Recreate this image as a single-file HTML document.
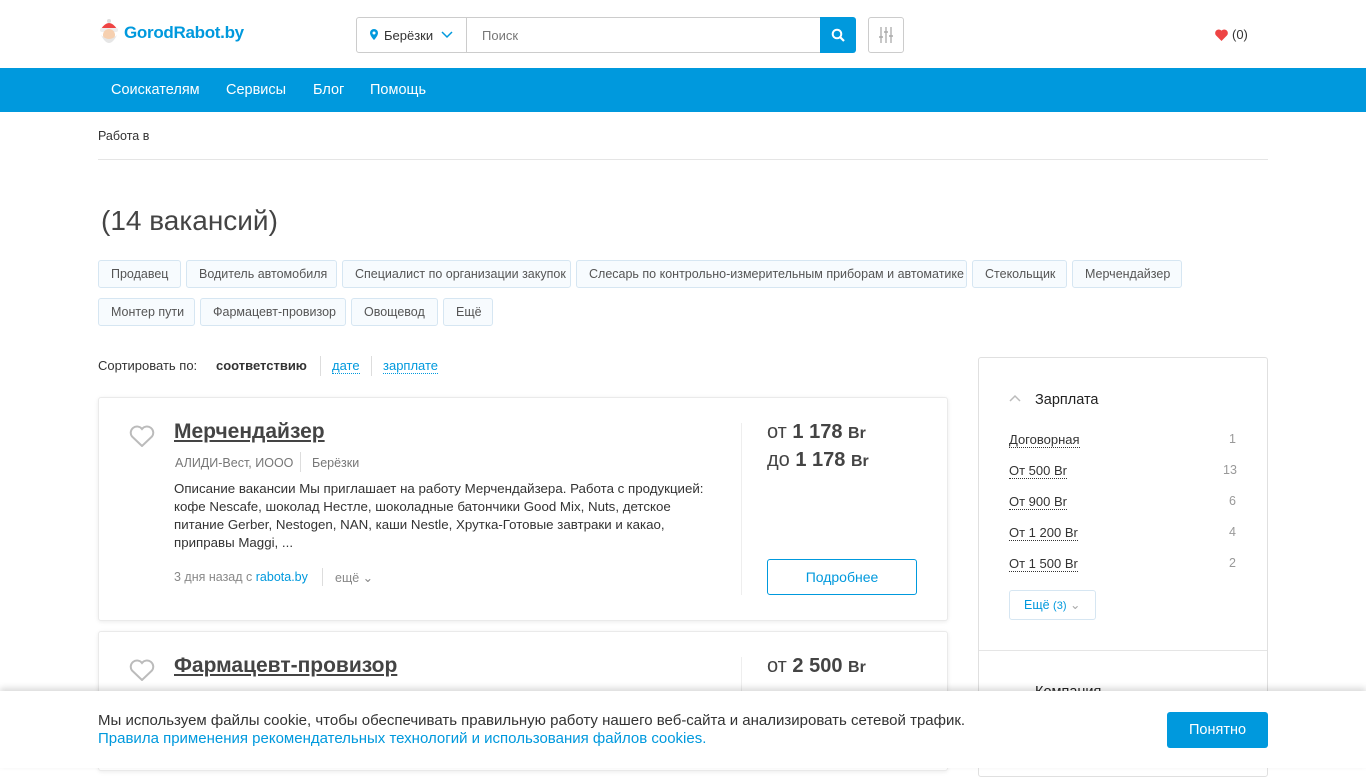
<!DOCTYPE html>
<html><head><meta charset="utf-8"><style>
*{box-sizing:border-box;margin:0;padding:0}
body{width:1366px;height:768px;overflow:hidden;font-family:"Liberation Sans",sans-serif;color:#333;background:#fff;position:relative}
.abs{position:absolute}
a{color:#0099dd;text-decoration:none}
.tag{position:absolute;height:28px;border:1px solid #d6e6f2;border-radius:3px;background:#f7fbfe;font-size:12.5px;color:#555;line-height:26px;padding:0 12px;white-space:nowrap;overflow:hidden}
.card{position:absolute;left:98px;width:850px;border:1px solid #eaeaea;border-radius:3px;box-shadow:0 1px 4px rgba(0,0,0,.08);background:#fff}
.dot{border-bottom:1px dotted #333;color:#333}
</style></head><body>
<svg class="abs" style="left:98px;top:19px" width="22" height="28" viewBox="0 0 22 28"><path d="M3 10 Q11 -2 19 10Z" fill="#e44"/><circle cx="11" cy="2" r="2" fill="#ddd"/><rect x="2" y="9" width="18" height="4" rx="2" fill="#eee"/><circle cx="11" cy="16" r="6" fill="#f6d0b0"/><path d="M3 16 Q11 32 19 16 Q11 24 3 16Z" fill="#e6e6e6"/></svg>
<div class="abs" style="left:124px;top:23px;font-size:17px;font-weight:bold;color:#0099dd;letter-spacing:-.3px">GorodRabot.by</div>
<div class="abs" style="left:356px;top:17px;width:111px;height:36px;border:1px solid #ccc;border-radius:3px 0 0 3px;font-size:13px;line-height:36px;padding-left:27px;color:#333">Берёзки</div>
<svg class="abs" style="left:370px;top:29px" width="8" height="11" viewBox="0 0 8 11"><path d="M4 0a4 4 0 0 0-4 4c0 3 4 7 4 7s4-4 4-7a4 4 0 0 0-4-4z" fill="#0099dd"/><circle cx="4" cy="4" r="1.5" fill="#fff"/></svg>
<svg class="abs" style="left:441px;top:31px" width="12" height="8"><path d="M1 1l5 5 5-5" stroke="#0099dd" stroke-width="1.5" fill="none"/></svg>
<div class="abs" style="left:466px;top:17px;width:355px;height:36px;border:1px solid #ccc;border-left:none;font-size:13px;line-height:36px;padding-left:16px;color:#777">Поиск</div>
<div class="abs" style="left:820px;top:17px;width:36px;height:36px;background:#0099dd;border-radius:0 3px 3px 0"></div>
<svg class="abs" style="left:831px;top:28px" width="14" height="14"><circle cx="6" cy="6" r="4.3" stroke="#fff" stroke-width="2" fill="none"/><path d="M9 9l4 4" stroke="#fff" stroke-width="2.2"/></svg>
<div class="abs" style="left:868px;top:17px;width:36px;height:36px;border:1px solid #ccc;border-radius:3px"></div>
<svg class="abs" style="left:879px;top:27px" width="14" height="16"><path d="M2 0v16M7 0v16M12 0v16" stroke="#aaa" stroke-width="1.3"/><path d="M0 10h4M5 5h4M10 9h4" stroke="#aaa" stroke-width="1.6"/></svg>
<svg class="abs" style="left:1215px;top:29px" width="13" height="12" viewBox="0 0 24 22"><path d="M12 22L2 12A6 6 0 0 1 12 3a6 6 0 0 1 10 9z" fill="#e44"/></svg>
<div class="abs" style="left:1232px;top:27px;font-size:13px">(0)</div>
<div class="abs" style="left:0;top:68px;width:1366px;height:44px;background:#0099dd"></div>
<div class="abs" style="left:111px;top:82px;font-size:14.5px;color:#fff">Соискателям</div>
<div class="abs" style="left:226px;top:82px;font-size:14.5px;color:#fff">Сервисы</div>
<div class="abs" style="left:313px;top:82px;font-size:14.5px;color:#fff">Блог</div>
<div class="abs" style="left:370px;top:82px;font-size:14.5px;color:#fff">Помощь</div>
<div class="abs" style="left:98px;top:129px;font-size:12.5px">Работа в</div>
<div class="abs" style="left:98px;top:159px;width:1170px;height:1px;background:#e5e5e5"></div>
<div class="abs" style="left:101px;top:205px;font-size:28px;color:#444">(14 вакансий)</div>
<div class="tag" style="left:98px;top:260px;width:83px">Продавец</div>
<div class="tag" style="left:186px;top:260px;width:151px">Водитель автомобиля</div>
<div class="tag" style="left:342px;top:260px;width:229px">Специалист по организации закупок</div>
<div class="tag" style="left:576px;top:260px;width:391px">Слесарь по контрольно-измерительным приборам и автоматике</div>
<div class="tag" style="left:972px;top:260px;width:95px">Стекольщик</div>
<div class="tag" style="left:1072px;top:260px;width:110px">Мерчендайзер</div>
<div class="tag" style="left:98px;top:298px;width:97px">Монтер пути</div>
<div class="tag" style="left:200px;top:298px;width:146px">Фармацевт-провизор</div>
<div class="tag" style="left:351px;top:298px;width:87px">Овощевод</div>
<div class="tag" style="left:443px;top:298px;width:50px">Ещё</div>
<div class="abs" style="left:98px;top:358px;font-size:13px">Сортировать по:</div>
<div class="abs" style="left:216px;top:358px;font-size:13px;font-weight:bold">соответствию</div>
<div class="abs" style="left:320px;top:356px;width:1px;height:20px;background:#ddd"></div>
<div class="abs" style="left:332px;top:358px;font-size:13px;color:#0099dd;border-bottom:1px dotted #0099dd">дате</div>
<div class="abs" style="left:371px;top:356px;width:1px;height:20px;background:#ddd"></div>
<div class="abs" style="left:383px;top:358px;font-size:13px;color:#0099dd;border-bottom:1px dotted #0099dd">зарплате</div>
<div class="card" style="top:397px;height:224px"></div>
<svg class="abs" style="left:129px;top:425px" width="26" height="22" viewBox="0 0 26 22"><path d="M13 21L3 11.5A6 6 0 0 1 13 4a6 6 0 0 1 10 7.5z" fill="none" stroke="#bbb" stroke-width="2"/></svg>
<div class="abs" style="left:174px;top:420px;font-size:21px;font-weight:bold;color:#444;text-decoration:underline">Мерчендайзер</div>
<div class="abs" style="left:175px;top:456px;font-size:12.5px;color:#777">АЛИДИ-Вест, ИООО</div>
<div class="abs" style="left:300px;top:452px;width:1px;height:20px;background:#ddd"></div>
<div class="abs" style="left:312px;top:456px;font-size:12.5px;color:#777">Берёзки</div>
<div class="abs" style="left:174px;top:480px;width:540px;font-size:13.3px;line-height:18px;color:#333">Описание вакансии Мы приглашает на работу Мерчендайзера. Работа с продукцией: кофе Nescafe, шоколад Нестле, шоколадные батончики Good Mix, Nuts, детское питание Gerber, Nestogen, NAN, каши Nestle, Хрутка-Готовые завтраки и какао, приправы Maggi, ...</div>
<div class="abs" style="left:174px;top:570px;font-size:12.5px;color:#888">3 дня назад с <a>rabota.by</a></div>
<div class="abs" style="left:322px;top:568px;width:1px;height:18px;background:#ddd"></div>
<div class="abs" style="left:335px;top:570px;font-size:12.5px;color:#888">ещё ⌄</div>
<div class="abs" style="left:741px;top:423px;width:1px;height:172px;background:#eee"></div>
<div class="abs" style="left:767px;top:421px;font-size:20px;color:#444">от <b>1 178</b> <b style="font-size:16px">Br</b></div>
<div class="abs" style="left:767px;top:449px;font-size:20px;color:#444">до <b>1 178</b> <b style="font-size:16px">Br</b></div>
<div class="abs" style="left:767px;top:559px;width:150px;height:36px;border:1px solid #0099dd;border-radius:3px;text-align:center;line-height:34px;font-size:14px;color:#0099dd">Подробнее</div>
<div class="card" style="top:631px;height:140px"></div>
<svg class="abs" style="left:129px;top:659px" width="26" height="22" viewBox="0 0 26 22"><path d="M13 21L3 11.5A6 6 0 0 1 13 4a6 6 0 0 1 10 7.5z" fill="none" stroke="#bbb" stroke-width="2"/></svg>
<div class="abs" style="left:174px;top:654px;font-size:21px;font-weight:bold;color:#444;text-decoration:underline">Фармацевт-провизор</div>
<div class="abs" style="left:741px;top:657px;width:1px;height:60px;background:#eee"></div>
<div class="abs" style="left:767px;top:655px;font-size:20px;color:#444">от <b>2 500</b> <b style="font-size:16px">Br</b></div>
<div class="abs" style="left:978px;top:357px;width:290px;height:420px;border:1px solid #e0e0e0;border-radius:3px"></div>
<svg class="abs" style="left:1009px;top:394px" width="12" height="8"><path d="M1 7l5-5 5 5" stroke="#bbb" stroke-width="1.5" fill="none"/></svg>
<div class="abs" style="left:1035px;top:392px;font-size:14.5px;color:#222">Зарплата</div>
<div class="abs" style="left:1009px;top:432px;font-size:13px"><span class="dot">Договорная</span></div><div class="abs" style="left:1229px;top:432px;font-size:12.5px;color:#999">1</div>
<div class="abs" style="left:1009px;top:463px;font-size:13px"><span class="dot">От 500 Br</span></div><div class="abs" style="left:1223px;top:463px;font-size:12.5px;color:#999">13</div>
<div class="abs" style="left:1009px;top:494px;font-size:13px"><span class="dot">От 900 Br</span></div><div class="abs" style="left:1229px;top:494px;font-size:12.5px;color:#999">6</div>
<div class="abs" style="left:1009px;top:525px;font-size:13px"><span class="dot">От 1 200 Br</span></div><div class="abs" style="left:1229px;top:525px;font-size:12.5px;color:#999">4</div>
<div class="abs" style="left:1009px;top:556px;font-size:13px"><span class="dot">От 1 500 Br</span></div><div class="abs" style="left:1229px;top:556px;font-size:12.5px;color:#999">2</div>
<div class="abs" style="left:1009px;top:590px;width:87px;height:30px;border:1px solid #d6e6f2;border-radius:3px;font-size:12.5px;line-height:28px;padding-left:14px;color:#0099dd">Ещё <span style="font-size:11px">(3)</span> <span style="color:#aaa">⌄</span></div>
<div class="abs" style="left:979px;top:650px;width:288px;height:1px;background:#e5e5e5"></div>
<div class="abs" style="left:1035px;top:684px;font-size:14.5px;color:#222">Компания</div>
<div class="abs" style="left:0;top:691px;width:1366px;height:77px;background:#fff;box-shadow:0 -3px 6px rgba(0,0,0,.15)"></div>
<div class="abs" style="left:98px;top:712px;font-size:15px;color:#333">Мы используем файлы cookie, чтобы обеспечивать правильную работу нашего веб-сайта и анализировать сетевой трафик.</div>
<div class="abs" style="left:98px;top:730px;font-size:15px;color:#0099dd">Правила применения рекомендательных технологий и использования файлов cookies.</div>
<div class="abs" style="left:1167px;top:712px;width:101px;height:36px;background:#0099dd;border-radius:3px;color:#fff;font-size:14.5px;line-height:36px;text-align:center">Понятно</div>
</body></html>
